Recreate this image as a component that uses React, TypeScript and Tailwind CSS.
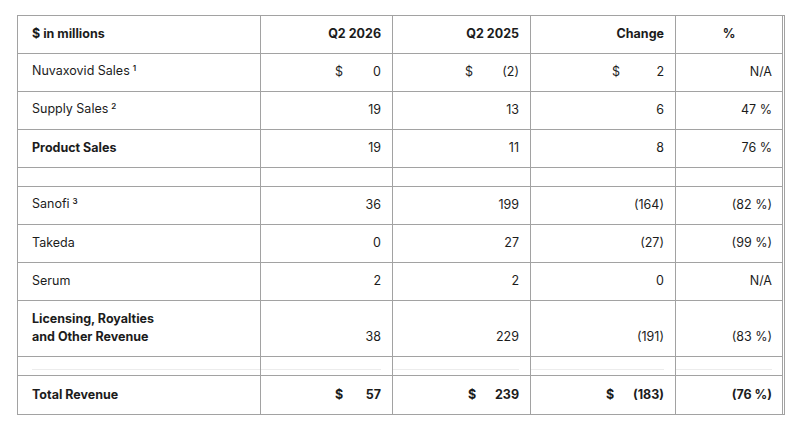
import React from 'react';

type Cell = { v: string; d?: string };
type Row = {
  label: React.ReactNode;
  cells?: Cell[];
  bold?: boolean;
  boldNums?: boolean;
  tall?: boolean;
  spacer?: boolean;
  faint?: boolean;
};

const colW = ['w-[243px]', 'w-[132px]', 'w-[138px]', 'w-[145px]', 'w-[107px]'];

const Sup = ({ n }: { n: string }) => (
  <span className="relative -top-[4px] ml-[3px] text-[8px] font-semibold">{n}</span>
);

const rows: Row[] = [
  {
    label: <>Nuvaxovid Sales<Sup n="1" /></>,
    cells: [
      { v: '0', d: 'pl-[74px]' },
      { v: '(2)', d: 'pl-[72px]' },
      { v: '2', d: 'pl-[81px]' },
      { v: 'N/A' },
    ],
  },
  { label: <>Supply Sales<Sup n="2" /></>, cells: [{ v: '19' }, { v: '13' }, { v: '6' }, { v: '47 %' }] },
  { label: 'Product Sales', bold: true, cells: [{ v: '19' }, { v: '11' }, { v: '8' }, { v: '76 %' }] },
  { label: '', spacer: true },
  { label: <>Sanofi<Sup n="3" /></>, cells: [{ v: '36' }, { v: '199' }, { v: '(164)' }, { v: '(82 %)' }] },
  { label: 'Takeda', cells: [{ v: '0' }, { v: '27' }, { v: '(27)' }, { v: '(99 %)' }] },
  { label: 'Serum', cells: [{ v: '2' }, { v: '2' }, { v: '0' }, { v: 'N/A' }] },
  {
    label: <>Licensing, Royalties<br />and Other Revenue</>,
    bold: true,
    tall: true,
    cells: [{ v: '38' }, { v: '229' }, { v: '(191)' }, { v: '(83 %)' }],
  },
  { label: '', spacer: true, faint: true },
  {
    label: 'Total Revenue',
    bold: true,
    boldNums: true,
    cells: [
      { v: '57', d: 'pl-[74px]' },
      { v: '239', d: 'pl-[75px]' },
      { v: '(183)', d: 'pl-[75px]' },
      { v: '(76 %)' },
    ],
  },
];

export default function App() {
  return (
    <div className="min-h-screen bg-white pt-[15px] pl-[17px] text-[12.5px] leading-[18px] text-[#1c1c1c] [font-family:Inter,'Noto_Sans',sans-serif]">
      <div className="w-[768px] border border-[#a2a2a2] pr-px">
        <div className="flex h-[38px] border-b border-[#a2a2a2] font-bold">
          <div className={`${colW[0]} flex items-end border-r border-[#a2a2a2] pb-[10px] pl-[14px]`}>$ in millions</div>
          <div className={`${colW[1]} flex items-end justify-end border-r border-[#a2a2a2] pb-[10px] pr-[11px]`}>Q2 2026</div>
          <div className={`${colW[2]} flex items-end justify-end border-r border-[#a2a2a2] pb-[10px] pr-[11px]`}>Q2 2025</div>
          <div className={`${colW[3]} flex items-end justify-end border-r border-[#a2a2a2] pb-[10px] pr-[11px]`}>Change</div>
          <div className={`${colW[4]} flex items-end justify-center border-r border-[#a2a2a2] pb-[10px]`}>%</div>
        </div>
        {rows.map((r, i) => {
          const h = r.spacer ? 'h-[19px]' : r.tall ? 'h-[56px]' : 'h-[38px]';
          const last = i === rows.length - 1;
          return (
            <div key={i} className={`flex ${h} ${last ? '' : 'border-b border-[#a2a2a2]'}`}>
              <div
                className={`${colW[0]} flex flex-col justify-end border-r border-[#a2a2a2] pb-[10px] pl-[14px] ${r.bold ? 'font-bold' : ''}`}
              >
                {r.faint ? <div className="mb-[-5px] border-b border-[#ececec]" /> : <div>{r.label}</div>}
              </div>
              {colW.slice(1).map((w, j) => {
                const c = r.cells?.[j];
                return (
                  <div
                    key={j}
                    className={`${w} flex items-end border-r border-[#a2a2a2] pb-[10px] ${j === 3 ? 'pr-[10px]' : 'pr-[11px]'} ${r.boldNums ? 'font-bold' : ''}`}
                  >
                    {r.faint && <div className="mb-[-5px] w-full border-b border-[#ececec]" />}
                    {c?.d && <span className={c.d}>$</span>}
                    {c && <span className="ml-auto">{c.v}</span>}
                  </div>
                );
              })}
            </div>
          );
        })}
      </div>
    </div>
  );
}
